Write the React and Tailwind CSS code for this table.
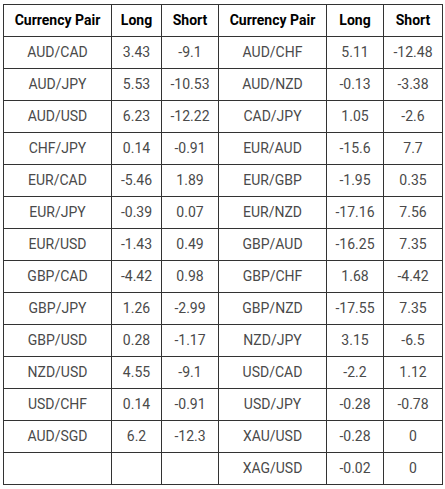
const rows = [
  ["AUD/CAD", "3.43", "-9.1", "AUD/CHF", "5.11", "-12.48"],
  ["AUD/JPY", "5.53", "-10.53", "AUD/NZD", "-0.13", "-3.38"],
  ["AUD/USD", "6.23", "-12.22", "CAD/JPY", "1.05", "-2.6"],
  ["CHF/JPY", "0.14", "-0.91", "EUR/AUD", "-15.6", "7.7"],
  ["EUR/CAD", "-5.46", "1.89", "EUR/GBP", "-1.95", "0.35"],
  ["EUR/JPY", "-0.39", "0.07", "EUR/NZD", "-17.16", "7.56"],
  ["EUR/USD", "-1.43", "0.49", "GBP/AUD", "-16.25", "7.35"],
  ["GBP/CAD", "-4.42", "0.98", "GBP/CHF", "1.68", "-4.42"],
  ["GBP/JPY", "1.26", "-2.99", "GBP/NZD", "-17.55", "7.35"],
  ["GBP/USD", "0.28", "-1.17", "NZD/JPY", "3.15", "-6.5"],
  ["NZD/USD", "4.55", "-9.1", "USD/CAD", "-2.2", "1.12"],
  ["USD/CHF", "0.14", "-0.91", "USD/JPY", "-0.28", "-0.78"],
  ["AUD/SGD", "6.2", "-12.3", "XAU/USD", "-0.28", "0"],
  ["", "", "", "XAG/USD", "-0.02", "0"],
];

// column widths measured off the screenshot
const widths = ["w-[108px]", "w-[50px]", "w-[57px]", "w-[108px]", "w-[57px]", "w-[59px]"];
const heads = ["Currency Pair", "Long", "Short", "Currency Pair", "Long", "Short"];

export default function App() {
  return (
    <div className="bg-white w-[445px] h-[489px] pt-[4px] pl-[3px] font-['Roboto',sans-serif]">
      <table className="border-collapse table-fixed w-[440px] text-[14px]">
        <thead>
          <tr className="h-[32px]">
            {heads.map((h, i) => (
              <th key={i} className={`${widths[i]} border border-[#333] text-center font-bold text-black p-0`}>
                {h}
              </th>
            ))}
          </tr>
        </thead>
        <tbody>
          {rows.map((r, ri) => (
            <tr key={ri} className="h-[32px]">
              {r.map((c, ci) => (
                <td key={ci} className="border border-[#333] text-center text-[#4a4a4a] p-0">
                  {c}
                </td>
              ))}
            </tr>
          ))}
        </tbody>
      </table>
    </div>
  );
}
